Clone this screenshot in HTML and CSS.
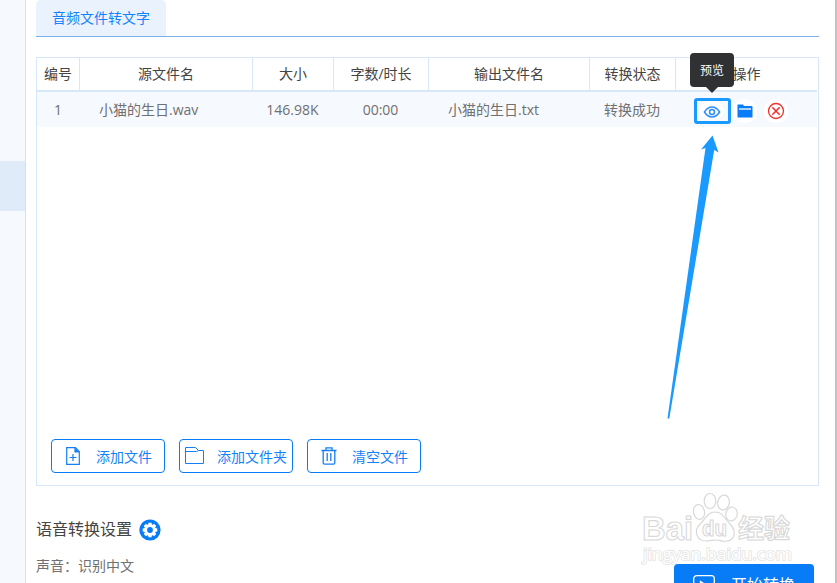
FILE: index.html
```html
<!DOCTYPE html>
<html lang="zh-CN">
<head>
<meta charset="utf-8">
<title>音频文件转文字</title>
<link rel="stylesheet" href="styles.css">
</head>
<body>
<div class="app">
  <aside class="sidebar"><div class="sidebar-active"></div></aside>
  <main class="main">
    <nav class="tabs"><a class="tab">音频文件转文字</a></nav>
    <section class="panel">
      <div class="row head">
        <div>编号</div><div>源文件名</div><div>大小</div><div>字数/时长</div><div>输出文件名</div><div>转换状态</div><div>操作</div>
      </div>
      <div class="row item">
        <div>1</div><div class="name">小猫的生日.wav</div><div>146.98K</div><div>00:00</div><div class="name">小猫的生日.txt</div><div>转换成功</div>
        <div class="ops">
          <span class="preview">
            <span class="tooltip">预览</span>
            <span class="op"><svg width="18" height="14" viewBox="0 0 18 14" fill="none" stroke="#2b8ef7" stroke-width="1.5"><path d="M1.400 7Q4.700 2 9 2T16.600 7Q13.300 12 9 12T1.400 7Z"/><circle cx="9" cy="7" r="2.500"/></svg></span>
          </span>
          <span class="op folder"><svg width="16" height="14" viewBox="0 0 16 14"><path fill="#0a7cf8" d="M.5.500H6L7 2H14.500Q15.500 2 15.500 3V13.500H1Q.5 13.500.5 13Z"/><path stroke="#fff" stroke-width="1.300" d="M2 5H14"/></svg></span>
          <span class="op remove"><svg width="18" height="18" viewBox="0 0 18 18" fill="none" stroke="#f0322f" stroke-width="1.300"><circle cx="9" cy="9" r="7.500"/><path d="M5.300 5.300L12.700 12.700M12.700 5.300L5.300 12.700" stroke-width="1.600"/></svg></span>
        </div>
      </div>
      <div class="actions">
        <button class="btn file"><svg width="14" height="18" viewBox="0 0 14 18" fill="none" stroke="#147ff5" stroke-width="1.200"><path d="M.7.700H9.500L13.300 4.500V17.300H.7Z"/><path d="M9 1V5H13" fill="#147ff5"/><path d="M7 7V14M3.500 10.500H10.500"/></svg><span>添加文件</span></button>
        <button class="btn dir"><svg width="19" height="18" viewBox="0 0 19 18" fill="none" stroke="#147ff5" stroke-width="1"><path d="M.5 16.500V.5H10.500L13.500 3.500H18.500V16.500Z"/><path d="M.6 4.500H11.500L13.500 3.500"/></svg><span>添加文件夹</span></button>
        <button class="btn trash"><svg width="16" height="18" viewBox="0 0 16 18" fill="none" stroke="#147ff5" stroke-width="1.300"><path d="M.5 3.500H15.500M5 3V.8H11V3M2.200 4V15.800Q2.200 17.200 3.600 17.200H12.400Q13.800 17.200 13.800 15.800V4M6.200 6V14M9.800 6V14"/></svg><span>清空文件</span></button>
      </div>
    </section>
    <div class="settings"><h2>语音转换设置</h2>
      <svg width="22" height="22" viewBox="-11 -11 22 22"><circle r="10.600" fill="#087cf7"/><g fill="#fff"><circle r="5.600"/><path id="t" d="M-1.500 -7.300H1.500L2.200 -4H-2.200Z"/><use href="#t" transform="rotate(45)"/><use href="#t" transform="rotate(90)"/><use href="#t" transform="rotate(135)"/><use href="#t" transform="rotate(180)"/><use href="#t" transform="rotate(225)"/><use href="#t" transform="rotate(270)"/><use href="#t" transform="rotate(315)"/></g><circle r="2.900" fill="#087cf7"/></svg>
    </div>
    <p class="voice">声音：识别中文</p>
  </main>
  <svg class="arrow" width="56" height="290" viewBox="664 132 56 290"><path fill="#1a9aff" d="M712.500 135.500L718.500 152.500L714.200 150L669.300 418.500H667.500L705.500 148L701 149.500Z"/></svg>
  <svg class="watermark" width="156" height="76" viewBox="638 490 156 76">
    <g fill="#fff" stroke="#d8d8d8" stroke-width="1.200">
      <ellipse cx="710" cy="501" rx="5.800" ry="7.500"/><ellipse cx="723.500" cy="502.500" rx="5.800" ry="7.500" transform="rotate(12 723.500 502.500)"/><ellipse cx="699" cy="512" rx="5.500" ry="7.500" transform="rotate(-10 699 512)"/><ellipse cx="731.500" cy="514" rx="5.700" ry="7" transform="rotate(14 731.500 514)"/>
      <path d="M715 512C707 512 706 519 700 524C693 531 697 541 706 541C711 541 712 540 716 540S722 542 727 541C736 540 736 530 730 524C723 517 723 512 715 512Z"/>
    </g>
    <g class="wm-text">
      <text x="642" y="540" font-size="34" textLength="51" lengthAdjust="spacingAndGlyphs">Bai</text>
      <text x="702" y="536" font-size="22" textLength="25" lengthAdjust="spacingAndGlyphs">du</text>
      <text x="738" y="538" font-size="26" textLength="52" lengthAdjust="spacingAndGlyphs">经验</text>
      <text class="url" x="643" y="560" font-size="16.500" textLength="149" lengthAdjust="spacingAndGlyphs">jingyan.baidu.com</text>
    </g>
  </svg>
  <button class="start"><svg width="22" height="22" viewBox="0 0 22 22" fill="none" stroke="#fff" stroke-width="1.300"><rect x=".7" y=".7" width="20.600" height="20.600" rx="3"/><path d="M7.500 6.500L14.500 11L7.500 16.500Z"/></svg><span>开始转换</span></button>
</div>
</body>
</html>
```
FILE: styles.css
```css
* { box-sizing: border-box; }
body { margin: 0; background: #fff; font-family: "Open Sans", "Noto Sans CJK SC", sans-serif; font-size: 14px; font-weight: 400; color: #444; }
.app { position: relative; display: flex; width: 837px; height: 583px; overflow: hidden; border-right: 2px solid #c2c2c2; }
.sidebar { width: 26px; flex: none; background: #f6faff; border-right: 1px solid #d0e2f6; padding-top: 161px; }
.sidebar-active { height: 50px; background: #dfebf9; }
.main { width: 793px; padding-left: 10px; }
.tabs { height: 37px; border-bottom: 1px solid #77b0ec; }
.tab { display: block; width: 130px; height: 36px; line-height: 36px; text-align: center; color: #1482fb; background: #eaf2fe; border-radius: 5px 5px 0 0; }
.panel { display: flex; flex-direction: column; height: 429px; margin-top: 20px; border: 1px solid #d7e6f8; }
.row { display: grid; grid-template-columns: 43px 173px 81px 95px 161px 86px 1fr; width: 780px; text-align: center; }
.head { height: 34px; line-height: 32px; border-bottom: 2px solid #d8e7f8; }
.head > div { border-right: 1px solid #d7e6f8; }
.head > div:last-child { border-right: 0; }
.item { height: 35px; line-height: 35px; background: #f6f9fe; color: #707070; }
.item > div { padding-right: 2px; }
.item > div:first-child { padding-right: 1px; }
.item .name { text-align: left; padding-left: 19px; }
.item .ops { display: flex; align-items: center; padding: 4px 0 0 18px; height: 34px; }
.preview { position: relative; display: flex; align-items: center; justify-content: center; width: 37px; height: 26px; border: 3px solid #1a9aff; border-radius: 3px; }
.op { display: flex; align-items: center; justify-content: center; width: 24px; height: 24px; border-radius: 50%; background: #fff; }
.preview .op { height: 20px; margin-right: 1px; }
.preview .op svg { margin-top: 1px; }
.folder { margin-left: 2px; }
.remove { margin-left: 7px; }
.tooltip { position: absolute; left: -7px; top: -48px; width: 44px; height: 34px; border-radius: 4px; background: #303133; color: #fff; font-size: 12px; line-height: 35px; text-align: center; }
.tooltip::after { content: ""; position: absolute; left: 16px; top: 34px; border: 6px solid transparent; border-top-color: #303133; border-bottom: 0; }
.actions { display: flex; gap: 14px; margin-top: auto; padding: 0 0 12px 14px; }
.btn { display: flex; align-items: center; width: 114px; height: 34px; padding: 0; border: 1px solid #087cf7; border-radius: 4px; background: #fff; color: #1482f8; font: inherit; }
.btn svg { flex: none; }
.btn span { white-space: nowrap; }
.file { padding-left: 14px; gap: 16px; }
.dir { padding-left: 5px; gap: 13px; }
.trash { padding-left: 13px; gap: 15px; }
.settings { display: flex; align-items: center; gap: 7px; height: 24px; margin-top: 31px; }
.settings h2 { margin: 0; font-size: 16px; font-weight: 400; line-height: 24px; }
.settings svg { margin-top: 1px; }
.voice { margin: 14px 0 0; color: #707070; line-height: 22px; }
.start { position: absolute; left: 674px; top: 564px; display: flex; gap: 16px; width: 140px; height: 40px; padding: 11px 0 0 19px; border: 0; border-radius: 4px; background: #087cf7; color: #fff; font: inherit; font-size: 16px; line-height: 20px; }
.start svg { flex: none; }
.arrow { position: absolute; left: 664px; top: 132px; }
.watermark { position: absolute; left: 638px; top: 490px; }
.wm-text { font-family: "Liberation Sans", "Noto Sans CJK SC", sans-serif; font-weight: 700; fill: #fff; stroke: #d8d8d8; stroke-width: 1.1px; }
.wm-text .url { font-family: "Open Sans", sans-serif; font-weight: 400; stroke: #e4e4e4; stroke-width: 1.6px; paint-order: stroke; }
```
